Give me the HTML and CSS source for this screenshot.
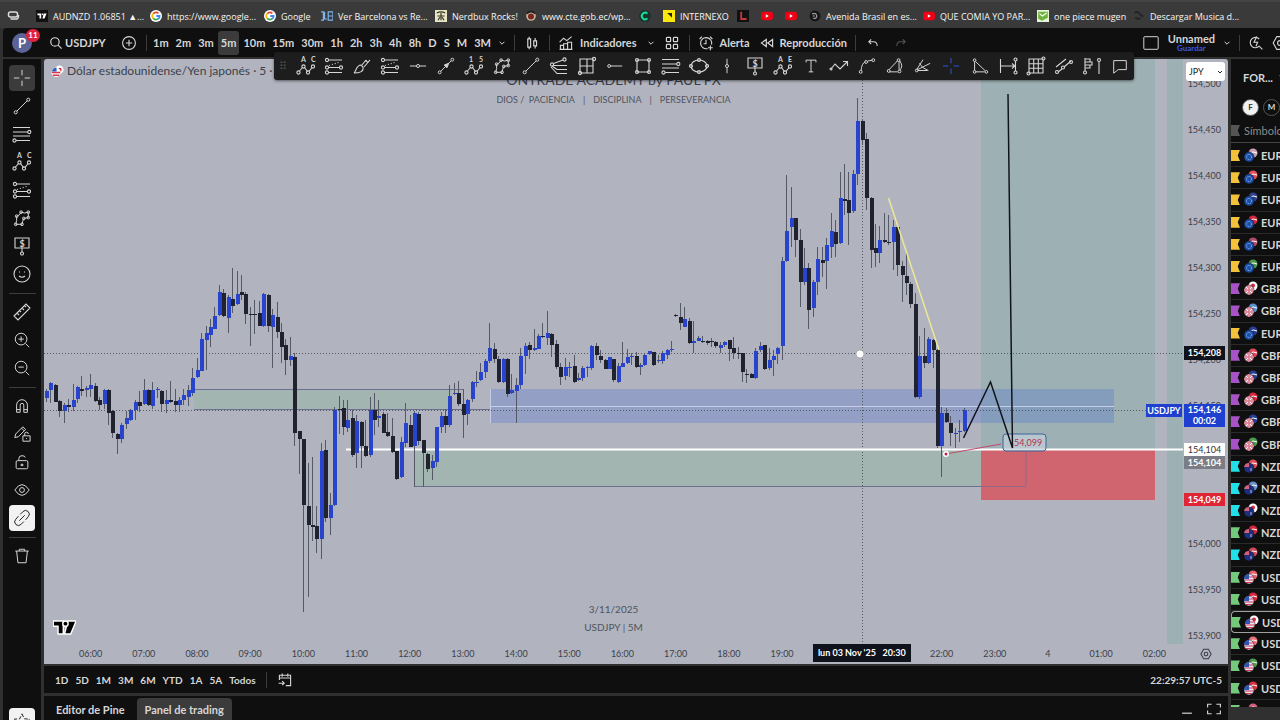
FILE: index.html
```html
<!DOCTYPE html>
<html lang="es">
<head>
    <meta charset="UTF-8">
    <meta name="viewport" content="width=device-width, initial-scale=1.0">
    <title>USDJPY 154,146</title>
    <link rel="stylesheet" href="styles.css">
</head>
<body>
    <!-- icon sprite -->
    <svg class="sprite" aria-hidden="true">
        <symbol id="i-cross" viewBox="0 0 20 20"><path d="M10 1v6M10 13v6M1 10h6M13 10h6"/></symbol>
        <symbol id="i-trend" viewBox="0 0 20 20"><path d="M4.2 15.8 15.8 4.2"/><circle cx="3" cy="17" r="1.7"/><circle cx="17" cy="3" r="1.7"/></symbol>
        <symbol id="i-fib" viewBox="0 0 20 20"><path d="M1 3.5h17M1 8h15M1 12h17M4 16.500h14"/><circle cx="17.300" cy="8" r="1.600"/><circle cx="2.500" cy="16.500" r="1.600"/></symbol>
        <symbol id="i-waves" viewBox="0 0 20 20"><path d="m3.500 15 3-3.500M8.500 11.500l3 4M13 15.500l3-4"/><circle cx="2.500" cy="16.500" r="1.600"/><circle cx="7.500" cy="10.500" r="1.600"/><circle cx="12" cy="16.500" r="1.600"/><circle cx="17" cy="10.500" r="1.600"/></symbol>
        <symbol id="i-abc" viewBox="0 0 20 20"><use href="#i-waves"/><text x="5" y="6">A</text><text x="15" y="6">C</text></symbol>
        <symbol id="i-135" viewBox="0 0 20 20"><use href="#i-waves"/><text x="5" y="6">1</text><text x="15" y="6">5</text></symbol>
        <symbol id="i-abe" viewBox="0 0 20 20"><use href="#i-waves"/><text x="5" y="6">A</text><text x="15" y="6">E</text></symbol>
        <symbol id="i-proj" viewBox="0 0 20 20"><path d="M4.500 4H18M4.500 11.500h11M4.500 16.500H18"/><path d="M5 9.500 16 6" stroke-dasharray="1 2"/><circle cx="3" cy="4" r="1.600"/><circle cx="3" cy="11.500" r="1.600"/><circle cx="17" cy="11.500" r="1.600"/><circle cx="3" cy="16.500" r="1.600"/></symbol>
        <symbol id="i-poly" viewBox="0 0 20 20"><path d="M4 8 7 6.500 9 3.500l4 1L17 3.500v6l-5 1-1 2.500-1 4H3l1-4z"/><circle cx="4" cy="8" r="1.500"/><circle cx="9" cy="3.500" r="1.500"/><circle cx="17" cy="3.500" r="1.500"/><circle cx="17" cy="9.500" r="1.500"/><circle cx="12" cy="10.500" r="1.500"/><circle cx="10" cy="17" r="1.500"/><circle cx="3" cy="17" r="1.500"/></symbol>
        <symbol id="i-dollar" viewBox="0 0 20 20"><path d="M3 2h14v10H3zM10 12v4"/><circle cx="10" cy="17.500" r="1.500"/><text x="7.500" y="10.500" class="big">$</text></symbol>
        <symbol id="i-smile" viewBox="0 0 20 20"><circle cx="10" cy="10" r="8"/><path d="M7.500 7.500v1M12.500 7.500v1M7 12q3 2.500 6 0"/></symbol>
        <symbol id="i-ruler" viewBox="0 0 20 20"><path d="m2 14 12-12 4 4L6 18zM5 11l2 2M7.500 8.500l1.500 1.500M10 6l2 2M12.500 3.500 14 5"/></symbol>
        <symbol id="i-zoomin" viewBox="0 0 20 20"><circle cx="9" cy="9" r="6.500"/><path d="m14 14 4 4M9 6v6M6 9h6"/></symbol>
        <symbol id="i-zoomout" viewBox="0 0 20 20"><circle cx="9" cy="9" r="6.500"/><path d="m14 14 4 4M6 9h6"/></symbol>
        <symbol id="i-magnet" viewBox="0 0 20 20"><path d="M4 17V9a6 6 0 0 1 12 0v8h-4V9a2 2 0 0 0-4 0v8zM4 14h4M12 14h4"/></symbol>
        <symbol id="i-penlock" viewBox="0 0 20 20"><path d="m2 14 1-4 8-8 3 3-8 8zM9.500 3.500l3 3M11 12h8v6h-8zM13 12v-2a2 2 0 0 1 4 0M15 14.500v1"/></symbol>
        <symbol id="i-lock" viewBox="0 0 20 20"><rect x="3.500" y="8.500" width="13" height="9" rx="1.500"/><path d="M6.500 8.500V6q0-3 3.500-3t3.500 2M9 12.500h2v1.500H9z"/></symbol>
        <symbol id="i-eye" viewBox="0 0 20 20"><path d="M2 10q8-12 16 0-8 12-16 0z"/><circle cx="10" cy="10" r="2.700"/></symbol>
        <symbol id="i-link" viewBox="0 0 20 20"><path d="m8 6 3-3a3.500 3.500 0 0 1 6 5.500L14 12M12 14l-3 3a3.500 3.500 0 0 1-6-5.500L6 8M7 13l6-6"/></symbol>
        <symbol id="i-trash" viewBox="0 0 20 20"><path d="M2.500 4.500h15M7 4.500v-2h6v2M4 4.500l1.500 13h9L16 4.500"/></symbol>
        <symbol id="i-star" viewBox="0 0 20 20"><path d="m10 2 2.500 5.500 6 .5-4.500 4 1.500 6L10 15l-5.500 3L6 12 1.500 8l6-.5z" stroke-dasharray="4 2"/></symbol>
        <symbol id="i-brush" viewBox="0 0 20 20"><path d="M2 17c2-1 2-8 7-8l2 2c1 5-4 6-9 6zM10 9l4-5M12 11l6-7M14 4q1 4 4 0"/></symbol>
        <symbol id="i-hline" viewBox="0 0 20 20"><path d="M1 10h7M12 10h7"/><circle cx="10" cy="10" r="1.700"/></symbol>
        <symbol id="i-arrow" viewBox="0 0 20 20"><path d="M4 16 15.500 4.500"/><path d="m13 7-2 5-3-3z" fill="currentColor"/><circle cx="3" cy="17" r="1.600"/><circle cx="17" cy="3" r="1.600"/></symbol>
        <symbol id="i-fan" viewBox="0 0 20 20"><path d="M4.500 7.500 14 4M4 9.500h14M3 10l5 3.500h10M2 11l6 6.500h10"/><circle cx="3" cy="8.500" r="1.600"/><circle cx="15.500" cy="3.500" r="1.600"/></symbol>
        <symbol id="i-gann" viewBox="0 0 20 20"><path d="M3 3h13v14H3zM3 10h13M10 3v14"/><circle cx="17" cy="3" r="1.600"/><circle cx="3" cy="17" r="1.600"/></symbol>
        <symbol id="i-ray" viewBox="0 0 20 20"><path d="M5 10h13"/><circle cx="3.500" cy="10" r="1.600"/></symbol>
        <symbol id="i-rect" viewBox="0 0 20 20"><path d="M4 4h12v12H4z"/><circle cx="4" cy="4" r="1.500"/><circle cx="16" cy="4" r="1.500"/><circle cx="4" cy="16" r="1.500"/><circle cx="16" cy="16" r="1.500"/></symbol>
        <symbol id="i-ellipse" viewBox="0 0 20 20"><ellipse cx="10" cy="10" rx="8" ry="6"/><circle cx="2" cy="10" r="1.500"/><circle cx="18" cy="10" r="1.500"/><circle cx="10" cy="4" r="1.500"/><circle cx="10" cy="16" r="1.500"/></symbol>
        <symbol id="i-vline" viewBox="0 0 20 20"><path d="M10 2v6M10 12v6"/><circle cx="10" cy="10" r="1.700"/></symbol>
        <symbol id="i-text" viewBox="0 0 20 20"><path d="M4.500 6V3.500h11V6M10 3.500v13M7.500 16.500h5"/></symbol>
        <symbol id="i-zig" viewBox="0 0 20 20"><path d="m2 13 4-5 5 5 7-7M14 5.500h4.500V10"/><circle cx="2" cy="13" r="1"/></symbol>
        <symbol id="i-curve" viewBox="0 0 20 20"><path d="M3.500 15Q4 7 8 5.500M11 4.500l5-1"/><circle cx="3" cy="16.500" r="1.600"/><circle cx="9" cy="5.500" r="1.600"/><circle cx="17" cy="3.500" r="1.600"/></symbol>
        <symbol id="i-sector" viewBox="0 0 20 20"><path d="M3.500 14 13 4M14.500 5v9M4 16.500h9"/><path d="M15 4q5 6 0 11"/><circle cx="14" cy="3.500" r="1.600"/><circle cx="3" cy="15.500" r="1.600"/><circle cx="15" cy="16" r="1.600"/></symbol>
        <symbol id="i-angle" viewBox="0 0 20 20"><path d="M3 14 10 3M4 15h11M4 14 18 7M6 7q3 6 10 8"/><circle cx="3" cy="15" r="1.500"/></symbol>
        <symbol id="i-tri" viewBox="0 0 20 20"><path d="M4 5v10M5 16.500h10M5 5l10.500 10"/><circle cx="4" cy="3.500" r="1.500"/><circle cx="4" cy="16.500" r="1.500"/><circle cx="17" cy="16.500" r="1.500"/></symbol>
        <symbol id="i-range" viewBox="0 0 20 20"><path d="M2.500 3v14M17.500 5v10M3 10h14M14 7.500l3 2.500-3 2.500"/><circle cx="17.500" cy="3.500" r="1.500"/><circle cx="17.500" cy="16.500" r="1.500"/></symbol>
        <symbol id="i-grid" viewBox="0 0 20 20"><path d="M3 3h14v14H3zM3 7.700h14M3 12.300h14M7.700 3v14M12.300 3v14"/><circle cx="17.500" cy="2.500" r="1.500"/><circle cx="2.500" cy="17.500" r="1.500"/></symbol>
        <symbol id="i-par" viewBox="0 0 20 20"><path d="M2 11 12 3M4 16l4-3M10 11l7-6"/><circle cx="3" cy="16" r="1.500"/><circle cx="9" cy="11.500" r="1.500"/><circle cx="17" cy="6" r="1.500"/></symbol>
        <symbol id="i-vol" viewBox="0 0 20 20"><path d="M3 2v13M3 3h5v3H3M3 6h7v3H3M3 9h5v3H3M17 6v12"/><circle cx="3" cy="16.500" r="1.500"/><circle cx="17" cy="4" r="1.500"/></symbol>
        <symbol id="i-note" viewBox="0 0 20 20"><path d="M3 4h14v10H8l-5 4z"/></symbol>
        <symbol id="i-search" viewBox="0 0 20 20"><circle cx="8.500" cy="8.500" r="6"/><path d="m13 13 5 5"/></symbol>
        <symbol id="i-plus" viewBox="0 0 20 20"><circle cx="10" cy="10" r="8"/><path d="M10 6v8M6 10h8"/></symbol>
        <symbol id="i-chev" viewBox="0 0 20 20"><path d="m4 7 6 6 6-6"/></symbol>
        <symbol id="i-candles" viewBox="0 0 20 20"><path d="M4 4h4v12H4zM6 1v3M6 16v3M12.500 7h4v7h-4zM14.500 3v4M14.500 14v4"/></symbol>
        <symbol id="i-ind" viewBox="0 0 20 20"><path d="M3 18v-5h4v5M7 18v-7h5v7M12 18V9h5v9M2 18h16M2 9l5-5 4 3 6-5"/></symbol>
        <symbol id="i-apps" viewBox="0 0 20 20"><rect x="2" y="2" width="6" height="6" rx="1"/><rect x="12" y="2" width="6" height="6" rx="1"/><rect x="2" y="12" width="6" height="6" rx="1"/><rect x="12" y="12" width="6" height="6" rx="1"/></symbol>
        <symbol id="i-alarm" viewBox="0 0 20 20"><path d="M12 17a7 7 0 1 1 5-5M10 6v5H7M2 5l3-3M15 2l3 3M15.500 13v6M12.500 16h6"/></symbol>
        <symbol id="i-replay" viewBox="0 0 20 20"><path d="M9 5v10l-7-5zM18 5v10l-7-5z"/></symbol>
        <symbol id="i-undo" viewBox="0 0 20 20"><path d="M7 4 3 8l4 4M3 8h8q6 0 6 7"/></symbol>
        <symbol id="i-redo" viewBox="0 0 20 20"><path d="m13 4 4 4-4 4M17 8H9q-6 0-6 7"/></symbol>
        <symbol id="i-square" viewBox="0 0 20 20"><rect x="2" y="3" width="16" height="14" rx="1"/></symbol>
        <symbol id="i-bolt" viewBox="0 0 20 20"><path d="M14 5a6.500 6.500 0 1 0 0 9l4 4M11 2 7.500 9H12l-2 5"/></symbol>
        <symbol id="i-cal" viewBox="0 0 20 20"><path d="M3 10V4h14v13h-6M3 7.500h14M6.500 2v4M13.500 2v4M2 14h7M6.500 11.500 9 14l-2.500 2.500"/></symbol>
        <symbol id="i-gear" viewBox="0 0 20 20"><path d="M6 2h8l4.500 8L14 18H6l-4.500-8z"/><circle cx="10" cy="10" r="3"/></symbol>
        <symbol id="i-full" viewBox="0 0 20 20"><path d="M2 8V4h5M13 4h5v4M18 12v4h-5M7 16H2v-4"/></symbol>
        <symbol id="i-google" viewBox="0 0 20 20"><circle cx="10" cy="10" r="10" fill="#fff" stroke="none"/><g fill="none" stroke-width="3"><path d="M5.500 6A6 6 0 0 1 14 5.500" stroke="#ea4335"/><path d="M5.500 6a6 6 0 0 0 0 8" stroke="#fbbc05"/><path d="M5.500 14a6 6 0 0 0 8.500.500" stroke="#34a853"/><path d="M10.500 10H16q0 3-2 4.500" stroke="#4285f4"/></g></symbol>
        <symbol id="i-yt" viewBox="0 0 20 20"><rect y="3" width="20" height="14" rx="4" fill="#f00014" stroke="none"/><path d="m8 7 5 3-5 3z" fill="#fff" stroke="none"/></symbol>
        <symbol id="i-tv" viewBox="0 0 24 14"><path d="M1 1h9v12H6V5H1zM16 1h7l-5 12h-5z"/><circle cx="13" cy="3" r="2"/></symbol>
    </svg>

    <nav class="bookmarks">
        <span class="bm-tabs"><svg viewBox="0 0 12 10"><rect x="1" y="1" width="9" height="5" rx="2"/><path d="M3 8h6q2 0 2-4"/></svg></span>
        <a href="#" class="bm"><svg class="bm-tv"><use href="#i-tv"/></svg>AUDNZD 1.06851 ▲...</a>
        <a href="#" class="bm"><svg><use href="#i-google"/></svg>https://www.google...</a>
        <a href="#" class="bm bm-short"><svg><use href="#i-google"/></svg>Google</a>
        <a href="#" class="bm"><svg viewBox="0 0 20 20"><path d="M0 3h4v14H0M6 3v12h4M12 3h8v14h-8zM12 10h8" stroke="#7fb4ec" stroke-width="2"/></svg>Ver Barcelona vs Re...</a>
        <a href="#" class="bm bm-mid"><svg viewBox="0 0 20 20"><path d="M0 0h20v20H0z" fill="#e9e6c8" stroke="none"/><path d="M3 5q7-4 14 0M4 10h12M10 5v12M5 17l3-5M15 17l-3-5" stroke="#33331f" stroke-width="2"/></svg>Nerdbux Rocks!</a>
        <a href="#" class="bm"><svg viewBox="0 0 20 20"><circle cx="10" cy="10" r="8" fill="#c9b79a" stroke="none"/><circle cx="10" cy="11" r="5" fill="#78271f" stroke="none"/><path d="M3 6q7-7 14 0" stroke="#222" stroke-width="3"/></svg>www.cte.gob.ec/wp...</a>
        <a href="#" class="bm bm-icon" aria-label="C"><svg viewBox="0 0 20 20"><circle cx="10" cy="10" r="10" fill="#14342d" stroke="none"/><path d="M14 6a5.500 5.500 0 1 0 0 8" stroke="#1fe0a0" stroke-width="3"/></svg></a>
        <a href="#" class="bm bm-name"><svg viewBox="0 0 20 20"><path d="M0 0h20v20H0z" fill="#fbe80b" stroke="none"/><path d="M7 5h8v8z" fill="#222" stroke="none"/></svg>INTERNEXO</a>
        <a href="#" class="bm bm-icon" aria-label="L"><svg viewBox="0 0 20 20"><path d="M0 0h20v20H0z" fill="#111" stroke="none"/><path d="M7 3v12h9" stroke="#c33a3a" stroke-width="3"/></svg></a>
        <a href="#" class="bm bm-icon" aria-label="YouTube"><svg><use href="#i-yt"/></svg></a>
        <a href="#" class="bm bm-icon" aria-label="YouTube"><svg><use href="#i-yt"/></svg></a>
        <a href="#" class="bm"><svg viewBox="0 0 20 20"><circle cx="10" cy="10" r="9" fill="#161616" stroke="none"/><path d="M5 6h6q4 4 0 8H7M6 10h4" stroke="#999" stroke-width="2"/></svg>Avenida Brasil en es...</a>
        <a href="#" class="bm"><svg><use href="#i-yt"/></svg>QUE COMIA YO PAR...</a>
        <a href="#" class="bm bm-op"><svg viewBox="0 0 20 20"><path d="M0 0h20v20H0z" fill="#e6f3d8" stroke="none"/><path d="M2 3h16v10L8 18 2 14z" fill="#6db33a" stroke="none"/><path d="m4 6 5 4 7-5" stroke="#fff" stroke-width="2"/></svg>one piece mugen</a>
        <a href="#" class="bm"><svg viewBox="0 0 20 20"><path d="M3 5q4-4 7 0t7 6M4 12q4 5 8 1" stroke="#222" stroke-width="3"/></svg>Descargar Musica d...</a>
    </nav>

    <header class="topbar">
        <div class="avatar">P<span class="badge">11</span></div>
        <button class="symbol"><svg class="ic s14"><use href="#i-search"/></svg>USDJPY</button>
        <button class="add" aria-label="Comparar"><svg class="ic s16"><use href="#i-plus"/></svg></button>
        <i class="sep"></i>
        <div class="intervals">
            <button>1m</button><button>2m</button><button>3m</button><button class="active">5m</button><button>10m</button><button>15m</button><button>30m</button><button>1h</button><button>2h</button><button>3h</button><button>4h</button><button>8h</button><button>D</button><button>S</button><button>M</button><button>3M</button>
        </div>
        <button aria-label="Más intervalos"><svg class="ic s8"><use href="#i-chev"/></svg></button>
        <i class="sep"></i>
        <button class="roomy" aria-label="Velas"><svg class="ic s14"><use href="#i-candles"/></svg></button>
        <i class="sep"></i>
        <button class="labelled"><svg class="ic s16"><use href="#i-ind"/></svg>Indicadores</button>
        <button aria-label="Favoritos"><svg class="ic s8"><use href="#i-chev"/></svg></button>
        <button class="roomy" aria-label="Plantillas"><svg class="ic s14"><use href="#i-apps"/></svg></button>
        <i class="sep"></i>
        <button class="labelled"><svg class="ic s16"><use href="#i-alarm"/></svg>Alerta</button>
        <button class="labelled last"><svg class="ic s14"><use href="#i-replay"/></svg>Reproducción</button>
        <i class="sep"></i>
        <button class="roomy" aria-label="Deshacer"><svg class="ic s12"><use href="#i-undo"/></svg></button>
        <button class="roomy dim" aria-label="Rehacer"><svg class="ic s12"><use href="#i-redo"/></svg></button>
        <div class="topright">
            <button aria-label="Diseño"><svg class="ic s18"><use href="#i-square"/></svg></button>
            <button class="layout-name">Unnamed<span>Guardar</span></button>
            <button aria-label="Diseños"><svg class="ic s8"><use href="#i-chev"/></svg></button>
            <i class="sep"></i>
            <button aria-label="Búsqueda rápida"><svg class="ic s16"><use href="#i-bolt"/></svg></button>
            <button aria-label="Ajustes"><svg class="ic s16"><use href="#i-gear"/></svg></button>
        </div>
    </header>

    <div class="workspace">
        <aside class="tools">
            <button class="active" aria-label="Cruz"><svg class="ic s18"><use href="#i-cross"/></svg></button>
            <button aria-label="Línea"><svg class="ic s18"><use href="#i-trend"/></svg></button>
            <button aria-label="Fibonacci"><svg class="ic s20"><use href="#i-fib"/></svg></button>
            <button aria-label="Patrones"><svg class="ic s20"><use href="#i-abc"/></svg></button>
            <button aria-label="Proyección"><svg class="ic s20"><use href="#i-proj"/></svg></button>
            <button aria-label="Formas"><svg class="ic s18"><use href="#i-poly"/></svg></button>
            <button aria-label="Nota de precio"><svg class="ic s20"><use href="#i-dollar"/></svg></button>
            <button aria-label="Iconos"><svg class="ic s20"><use href="#i-smile"/></svg></button>
            <hr>
            <button aria-label="Medir"><svg class="ic s20"><use href="#i-ruler"/></svg></button>
            <button aria-label="Acercar"><svg class="ic s18"><use href="#i-zoomin"/></svg></button>
            <button aria-label="Alejar"><svg class="ic s18"><use href="#i-zoomout"/></svg></button>
            <hr>
            <button aria-label="Imán"><svg class="ic s18"><use href="#i-magnet"/></svg></button>
            <button aria-label="Modo dibujo"><svg class="ic s18"><use href="#i-penlock"/></svg></button>
            <button aria-label="Bloquear"><svg class="ic s18"><use href="#i-lock"/></svg></button>
            <button aria-label="Ocultar"><svg class="ic s18"><use href="#i-eye"/></svg></button>
            <button class="light" aria-label="Vincular"><svg class="ic s18"><use href="#i-link"/></svg></button>
            <hr>
            <button aria-label="Eliminar"><svg class="ic s18"><use href="#i-trash"/></svg></button>
            <button class="light star" aria-label="Favoritos"><svg class="ic s18"><use href="#i-star"/></svg></button>
        </aside>

        <main class="center">
            <section class="chart">
                <div class="plot">
                    <svg id="canvas" viewBox="44 59 1139 585" preserveAspectRatio="none">
                        <rect class="profit" x="981" y="59" width="174" height="391"/>
                        <rect class="profit" x="1167" y="59" width="16" height="585"/>
                        <rect class="demand" x="194" y="390" width="258" height="20"/>
                        <path class="edge" d="M194 389.500H463M194 409.500H490"/>
                        <rect class="demand" x="415" y="450" width="611" height="36"/>
                        <path class="edge" d="M415 486.500h611V450"/>
                        <rect class="supply" x="490" y="389" width="624" height="34"/>
                        <path class="supply-mid" d="M490 406.500h624M490.500 389v34"/>
                        <rect class="loss" x="981" y="450" width="174" height="50"/>
                        <path class="edge" d="M981 486.500h45V450" opacity=".6"/>
                        <path class="dots" d="M44 353.500H1183M44 410.500H1183M862.500 59V644"/>
                        <path class="support" d="M346 449.500H1183"/>
                        <g id="candles"></g>
                        <path class="yellow" d="M888.500 198 939 350"/>
                        <rect class="callout" x="1003" y="434" width="43" height="17" rx="3"/>
                        <path class="pink" d="M946 454 1001 444"/>
                        <circle cx="946" cy="454" r="3" fill="#fff"/><circle cx="946" cy="454" r="1.500" fill="#c02050"/>
                        <text class="callout-text" x="1014" y="446">54,099</text>
                        <path class="draw" d="M963.500 438 990.500 382 1012.500 448 1008 94"/>
                        <circle cx="860" cy="354" r="4" fill="#fff" stroke="#777" stroke-width=".5"/>
                    </svg>
                    <div class="legend">
                        <svg viewBox="0 0 14 14"><circle cx="9" cy="5" r="4.500" fill="#fff"/><circle cx="9.500" cy="5" r="2" fill="#d8324c"/><circle cx="5.500" cy="8" r="5" fill="#fff"/><path d="M1 8h9M2 11h7" stroke="#d8324c" stroke-width="1.500"/><path d="M1 7a5 5 0 0 1 5-4v4z" fill="#2d5dc2"/></svg>
                        Dólar estadounidense/Yen japonés · 5 ·
                    </div>
                    <div class="mark">
                        <div class="mark-title">ONTRADE ACADEMY by PAUL FX</div>
                        <div class="mark-motto"><span>DIOS / &nbsp;PACIENCIA</span><span>|</span><span>DISCIPLINA</span><span>|</span><span>PERSEVERANCIA</span></div>
                        <div class="mark-date">3/11/2025</div>
                        <div>USDJPY | 5M</div>
                    </div>
                    <svg class="tv-logo"><use href="#i-tv"/></svg>
                    <span class="tag tag-name">USDJPY</span>
                </div>
                <div class="prices">
                    <select aria-label="Moneda"><option>JPY</option></select>
                    <div class="price-list" id="prices"></div>
                    <span class="tag tag-cursor">154,208</span>
                    <span class="tag tag-last">154,146<br>00:02</span>
                    <span class="tag tag-white">154,104</span>
                    <span class="tag tag-gray">154,104</span>
                    <span class="tag tag-red">154,049</span>
                </div>
                <div class="times">
                    <div class="time-list" id="times"></div>
                    <span class="tag tag-time">lun 03 Nov '25 &nbsp; 20:30</span>
                </div>
                <button class="gear" aria-label="Ajustes de escala"><svg class="ic s12"><use href="#i-gear"/></svg></button>
            </section>

            <section class="ranges">
                <button>1D</button><button>5D</button><button>1M</button><button>3M</button><button>6M</button><button>YTD</button><button>1A</button><button>5A</button><button>Todos</button>
                <i class="sep"></i>
                <button aria-label="Ir a"><svg class="ic s16"><use href="#i-cal"/></svg></button>
                <span class="clock">22:29:57 UTC-5</span>
            </section>

            <section class="panel-tabs">
                <button>Editor de Pine</button>
                <button class="active">Panel de trading</button>
                <div class="panel-actions">
                    <button aria-label="Minimizar"><svg class="ic s14" viewBox="0 0 20 20"><path d="M3 16h14"/></svg></button>
                    <button aria-label="Maximizar"><svg class="ic s16"><use href="#i-full"/></svg></button>
                </div>
            </section>
        </main>

        <aside class="watch">
            <div class="watch-title">FOR... <svg class="ic s8"><use href="#i-chev"/></svg></div>
            <div class="watch-chips"><button class="on">F</button><button>M</button></div>
            <div class="watch-head"><i></i>Símbolo</div>
            <div class="watch-list" id="watch"></div>
        </aside>
    </div>

    <div class="favbar">
        <span class="grip">⠿</span>
        <button aria-label="ABC"><svg class="ic s20"><use href="#i-abc"/></svg></button>
        <button aria-label="Posición larga"><svg class="ic s20"><use href="#i-proj"/></svg></button>
        <button aria-label="Pincel"><svg class="ic s20"><use href="#i-brush"/></svg></button>
        <button aria-label="Posición corta"><svg class="ic s20"><use href="#i-proj"/></svg></button>
        <button aria-label="Línea horizontal"><svg class="ic s18"><use href="#i-hline"/></svg></button>
        <button aria-label="Flecha"><svg class="ic s18"><use href="#i-arrow"/></svg></button>
        <button aria-label="Impulso"><svg class="ic s20"><use href="#i-135"/></svg></button>
        <button aria-label="Polígono"><svg class="ic s18"><use href="#i-poly"/></svg></button>
        <button aria-label="Tendencia"><svg class="ic s18"><use href="#i-trend"/></svg></button>
        <button aria-label="Abanico"><svg class="ic s20"><use href="#i-fan"/></svg></button>
        <button aria-label="Gann"><svg class="ic s20"><use href="#i-gann"/></svg></button>
        <button aria-label="Rayo"><svg class="ic s18"><use href="#i-ray"/></svg></button>
        <button aria-label="Rectángulo"><svg class="ic s20"><use href="#i-rect"/></svg></button>
        <button aria-label="Retroceso"><svg class="ic s20"><use href="#i-fib"/></svg></button>
        <button aria-label="Elipse"><svg class="ic s20"><use href="#i-ellipse"/></svg></button>
        <button aria-label="Línea vertical"><svg class="ic s18"><use href="#i-vline"/></svg></button>
        <button aria-label="Etiqueta de precio"><svg class="ic s20"><use href="#i-dollar"/></svg></button>
        <button aria-label="ABCDE"><svg class="ic s20"><use href="#i-abe"/></svg></button>
        <button aria-label="Texto"><svg class="ic s18"><use href="#i-text"/></svg></button>
        <button aria-label="Ruta"><svg class="ic s20"><use href="#i-zig"/></svg></button>
        <button aria-label="Curva"><svg class="ic s18"><use href="#i-curve"/></svg></button>
        <button aria-label="Sector"><svg class="ic s18"><use href="#i-sector"/></svg></button>
        <button aria-label="Ángulo"><svg class="ic s18"><use href="#i-angle"/></svg></button>
        <button class="picked" aria-label="Cruz"><svg class="ic s18"><use href="#i-cross"/></svg></button>
        <button aria-label="Triángulo"><svg class="ic s18"><use href="#i-tri"/></svg></button>
        <button aria-label="Rango"><svg class="ic s20"><use href="#i-range"/></svg></button>
        <button aria-label="Cuadrícula"><svg class="ic s20"><use href="#i-grid"/></svg></button>
        <button aria-label="Canal"><svg class="ic s20"><use href="#i-par"/></svg></button>
        <button aria-label="Perfil de volumen"><svg class="ic s20"><use href="#i-vol"/></svg></button>
        <button aria-label="Comentario"><svg class="ic s18"><use href="#i-note"/></svg></button>
    </div>

    <script src="script.js"></script>
</body>
</html>
```
FILE: styles.css
```css
* {
    box-sizing: border-box;
}
body {
    margin: 0;
    height: 100vh;
    overflow: hidden;
    display: flex;
    flex-direction: column;
    background-color: #303030;
    color: #d6d6d6;
    font-family: "Trebuchet MS", Lato, sans-serif;
    font-size: 11px;
    position: relative;
}
button {
    background: none;
    border: none;
    padding: 0;
    color: inherit;
    font: inherit;
    cursor: pointer;
    display: flex;
    align-items: center;
    justify-content: center;
    white-space: nowrap;
}
.sprite {
    display: none;
}
svg {
    flex: none;
}
.ic {
    display: block;
    fill: none;
    stroke: currentColor;
    stroke-width: 1.1;
    overflow: visible;
}
symbol text {
    font-size: 7px;
    font-weight: bold;
    fill: currentColor;
    stroke: none;
}
symbol text.big {
    font-size: 9px;
}
.s8 { width: 8px; height: 8px; stroke-width: 2.5; }
.s12 { width: 12px; height: 12px; stroke-width: 1.7; }
.s14 { width: 14px; height: 14px; stroke-width: 1.7; }
.s16 { width: 16px; height: 16px; stroke-width: 1.4; }
.s18 { width: 18px; height: 18px; }
.s20 { width: 20px; height: 20px; }

.sep {
    flex: none;
    width: 1px;
    height: 16px;
    background-color: #3d3d3d;
}

/* bookmarks */
.bookmarks {
    flex: none;
    height: 28px;
    padding: 2px 0 0 7px;
    display: flex;
    align-items: center;
    background-color: #3a3a3a;
    border-top: 2px solid #444;
    overflow: hidden;
    font-family: "Segoe UI", "Open Sans", sans-serif;
    font-size: 9px;
    font-weight: 500;
}
.bm-tabs {
    width: 29px;
    flex: none;
    display: flex;
}
.bm-tabs svg {
    width: 13px;
    height: 10px;
    fill: none;
    stroke: #ddd;
    stroke-width: 1.5;
}
.bm {
    flex: none;
    width: 114px;
    display: flex;
    align-items: center;
    gap: 5px;
    color: #f5f5f5;
    text-decoration: none;
    white-space: nowrap;
}
.bm svg {
    width: 12px;
    height: 12px;
    fill: none;
}
.bm .bm-tv {
    background-color: #111;
    fill: #fff;
    padding: 2px 1px;
}
.bm-short { width: 57px; }
.bm-mid { width: 90px; }
.bm-icon { width: 24px; }
.bm-name { width: 74px; }
.bm-op { width: 96px; }

/* top bar */
.topbar {
    flex: none;
    height: 29px;
    margin-left: 3px;
    padding-left: 9px;
    display: flex;
    align-items: center;
    background-color: #0f0f0f;
    font-weight: bold;
    border-radius: 4px 0 0 0;
}
.avatar {
    position: relative;
    width: 20px;
    height: 20px;
    border-radius: 50%;
    background-color: #5c6397;
    color: #fff;
    font-size: 13px;
    text-align: center;
    line-height: 20px;
}
.badge {
    position: absolute;
    top: -4px;
    left: 14px;
    min-width: 14px;
    height: 13px;
    border-radius: 7px;
    background-color: #e0213f;
    font-size: 8px;
    line-height: 13px;
}
.symbol {
    margin-left: 17px;
    gap: 2px;
    width: 56px;
    justify-content: flex-start;
}
.add {
    margin: 0 9px 0 16px;
}
.intervals {
    display: flex;
    flex: none;
    width: 344px;
    margin-right: 4px;
    justify-content: space-between;
}
.intervals button {
    height: 24px;
    padding: 0 3px;
    border-radius: 3px;
}
.intervals .active {
    background-color: #3b3b3b;
}
.topbar > .sep {
    margin: 0 8px;
}
.topbar .add + .sep {
    margin: 0 3px 0 0;
}
.roomy {
    width: 18px;
}
.labelled {
    gap: 6px;
    margin-right: 10px;
}
.labelled.last {
    margin-right: 0;
}
.labelled + button + .roomy {
    margin-left: 8px;
}
.dim {
    margin-left: 10px;
    color: #555;
}
.topright {
    flex: 1;
    display: flex;
    align-items: center;
    justify-content: flex-end;
    gap: 8px;
    margin-right: -8px;
}
.layout-name {
    flex-direction: column;
    line-height: 10px;
}
.layout-name span {
    font-size: 8px;
    line-height: 8px;
    color: #3a55f0;
}

/* workspace */
.workspace {
    flex: 1;
    min-height: 0;
    display: flex;
    padding: 2px 0 0 3px;
    gap: 3px;
}
.tools {
    flex: none;
    width: 38px;
    padding-top: 6px;
    display: flex;
    flex-direction: column;
    align-items: center;
    gap: 2px;
    background-color: #0f0f0f;
}
.tools button {
    flex: none;
    width: 26px;
    height: 26px;
    border-radius: 4px;
}
.tools .active {
    background-color: #3b3b3b;
}
.tools .light {
    background-color: #f2f2f2;
    color: #222;
}
.tools .star {
    margin-top: auto;
    margin-bottom: -14px;
}
.tools hr {
    flex: none;
    width: 27px;
    height: 1px;
    margin: 4px 0 3px;
    border: none;
    background-color: #3d3d3d;
}
.center {
    flex: 1;
    min-width: 0;
    display: flex;
    flex-direction: column;
}

/* chart */
.chart {
    flex: 1;
    min-height: 0;
    display: grid;
    grid-template-columns: 1fr 45px;
    grid-template-rows: 1fr 20px;
    background-color: #b1b4bf;
    color: #3c3f4a;
    border-radius: 3px 3px 0 0;
    font-size: 9px;
    overflow: hidden;
}
.plot, .prices, .times {
    position: relative;
    min-height: 0;
}
#canvas {
    display: block;
    position: absolute;
    width: 100%;
    height: 100%;
}
#canvas path {
    fill: none;
}
.profit { fill: #9db1b4; }
.demand { fill: #86b890; fill-opacity: .3; }
.supply { fill: #4064d8; fill-opacity: .26; }
.loss { fill: #d0656f; }
.edge { stroke: #6d6f92; }
.supply-mid { stroke: #c5cce6; }
.dots { stroke: #555862; stroke-dasharray: 1 2; }
.support { stroke: #fff; stroke-width: 2; }
.yellow { stroke: #ece79a; stroke-width: 1.5; }
.draw { stroke: #10131c; stroke-width: 1.5; }
.pink { stroke: #c04a6c; }
.callout { fill: #c3cfda; fill-opacity: .7; stroke: #3d6399; }
.callout-text { fill: #b5304f; font-size: 9px; }
.up { fill: #2843cc; }
.down { fill: #20232f; }
.wick { stroke: #555866; }

.legend {
    position: absolute;
    top: 4px;
    left: 7px;
    display: flex;
    align-items: center;
    gap: 3px;
    font-size: 12px;
    line-height: 16px;
    white-space: nowrap;
}
.legend svg {
    width: 13px;
    height: 13px;
}
.mark {
    position: absolute;
    top: 10px;
    right: 0;
    bottom: 8px;
    left: 0;
    display: flex;
    flex-direction: column;
    align-items: center;
    font-size: 10px;
    line-height: 18px;
    color: #50535e;
}
.mark-title {
    font-size: 14px;
    line-height: 22px;
    color: #3c3f4a;
}
.mark-motto {
    display: flex;
    gap: 8px;
    font-size: 9px;
}
.mark-date {
    margin-top: auto;
}
.tv-logo {
    position: absolute;
    left: 9px;
    bottom: 9px;
    width: 23px;
    height: 15px;
    overflow: visible;
    fill: #000;
    stroke: #fff;
    stroke-width: 3;
    paint-order: stroke;
}
.prices select {
    position: absolute;
    z-index: 1;
    top: 3px;
    left: 3px;
    width: 39px;
    height: 19px;
    padding: 0 3px;
    appearance: none;
    border: none;
    border-radius: 3px;
    background: #fff url("data:image/svg+xml,%3Csvg xmlns='http://www.w3.org/2000/svg' viewBox='0 0 8 8'%3E%3Cpath d='M2 3l2 2 2-2' fill='none' stroke='%23222'/%3E%3C/svg%3E") no-repeat right 1px center / 8px 8px;
    color: #222;
    font-family: inherit;
    font-size: 9px;
}
.price-list {
    height: 100%;
    padding: 2px 7px 0 0;
    display: flex;
    flex-direction: column;
}
.price-list span {
    flex: 0 0 46px;
    line-height: 46px;
    text-align: right;
}
.tag {
    position: absolute;
    left: 1px;
    width: 41px;
    height: 14px;
    margin-top: -7px;
    line-height: 14px;
    text-align: center;
    font-weight: bold;
    color: #fff;
}
.tag-cursor { top: 50.3%; background-color: #10131c; }
.tag-last { top: 60.2%; height: 23px; line-height: 11px; background-color: #1e3fd0; }
.tag-white { top: 66.8%; background-color: #fff; color: #333; height: 13px; line-height: 13px; font-weight: normal; }
.tag-gray { top: 69%; height: 13px; line-height: 13px; background-color: #7b7d86; }
.tag-red { top: 75.3%; height: 13px; line-height: 13px; background-color: #e02636; }
.tag-name { top: 60.2%; left: auto; right: 1px; width: 36px; height: 13px; line-height: 13px; background-color: #1e3fd0; }
.time-list {
    display: flex;
    height: 100%;
    padding: 0 2px 0 20px;
    line-height: 20px;
}
.time-list span {
    flex: 1 1 0;
    min-width: 0;
    text-align: center;
}
.tag-time {
    top: 0;
    left: 67.5%;
    width: 98px;
    height: 18px;
    margin: 0;
    line-height: 18px;
    background-color: #10131c;
}

/* bottom */
.ranges, .panel-tabs {
    flex: none;
    display: flex;
    align-items: center;
    background-color: #0f0f0f;
    font-weight: bold;
}
.ranges {
    height: 27px;
    margin-top: 2px;
    padding: 0 6px 0 11px;
    gap: 7px;
    font-size: 10px;
}
.ranges .sep {
    margin: 0 3px;
}
.clock {
    margin-left: auto;
}
.panel-tabs {
    height: 24px;
    margin-top: 3px;
    padding: 2px 6px 0 4px;
    gap: 4px;
}
.panel-tabs > button {
    height: 22px;
    padding: 0 8px;
    border-radius: 4px 4px 0 0;
}
.panel-tabs .active {
    background-color: #3b3b3b;
}
.panel-actions {
    margin-left: auto;
    display: flex;
    gap: 12px;
}

/* watchlist */
.watch {
    flex: none;
    width: 49px;
    margin-bottom: 13px;
    display: flex;
    flex-direction: column;
    background-color: #0f0f0f;
    overflow: hidden;
    font-weight: bold;
    white-space: nowrap;
}
.watch-title {
    flex: none;
    height: 36px;
    padding-left: 12px;
    display: flex;
    align-items: center;
    gap: 5px;
}
.watch-chips {
    flex: none;
    height: 24px;
    padding-left: 11px;
    display: flex;
    align-items: center;
    gap: 4px;
}
.watch-chips button {
    flex: none;
    width: 17px;
    height: 17px;
    border: 1px solid #555;
    border-radius: 50%;
    font-size: 8px;
}
.watch-chips .on {
    background-color: #f2f2f2;
    color: #333;
}
.watch-head {
    flex: none;
    height: 24px;
    display: flex;
    align-items: center;
    gap: 4px;
    font-weight: normal;
    color: #8a8a8a;
    border-bottom: 1px solid #444;
}
.watch-head i, .flag {
    flex: none;
    width: 9px;
    height: 11px;
    background-color: #555;
    clip-path: polygon(0 0, 100% 0, 75% 50%, 100% 100%, 0 100%);
}
.watch-list {
    flex: 1;
    min-height: 0;
    overflow: hidden;
    padding-top: 2px;
    display: flex;
    flex-direction: column;
}
.row {
    flex: 0 0 3.95%;
    display: flex;
    align-items: center;
    gap: 3px;
    border-bottom: 1px solid #2a2a2a;
}
.row svg {
    width: 15px;
    height: 15px;
}
.row.selected {
    border: 1px solid #a0a0a0;
    border-right: none;
    border-radius: 4px 0 0 4px;
}
.yellow-flag { background-color: #f3c13a; }
.purple-flag { background-color: #a852c8; }
.cyan-flag { background-color: #22e0e8; }
.green-flag { background-color: #74c97c; }

/* floating favourites */
.favbar {
    position: absolute;
    top: 52px;
    left: 274px;
    width: 860px;
    height: 28px;
    display: flex;
    align-items: center;
    background-color: #1d1d1d;
    border-radius: 3px;
    box-shadow: 0 1px 3px rgba(0, 0, 0, 0.5);
}
.favbar button {
    flex: 1;
    height: 28px;
}
.grip {
    width: 18px;
    text-align: center;
    color: #555;
}
.favbar .picked {
    color: #2f55d8;
}
```
FILE: script.js
```js
// one candle per 5 minutes: high, body top, body bottom, low, direction
var candles = `389 391 398 402 u|382 383 390 403 u|384 385 402 402 d|400 401 411 417 d|403 405 411 423 u|399 405 407 412 d
384 400 407 411 u|386 387 399 403 u|376 389 391 396 d|386 388 390 397 u|374 385 389 397 u|383 386 401 402 d
397 400 405 410 d|389 390 404 409 u|389 390 413 425 d|410 411 433 438 d|433 434 439 454 d|423 425 439 443 u
411 418 424 429 u|409 410 420 421 u|400 402 410 420 u|391 402 406 412 d|379 390 404 405 u|389 390 405 406 d
382 390 406 409 u|387 389 390 398 u|390 391 404 412 d|390 400 404 413 u|381 400 402 403 d|389 401 405 412 d
397 400 405 412 u|389 395 400 405 u|385 390 397 406 u|368 378 393 396 u|358 370 377 378 u|333 339 371 371 u
326 333 340 370 u|319 327 335 347 u|307 316 329 329 u|285 292 315 316 u|289 293 316 317 d|295 297 318 333 u
268 299 306 313 d|271 294 304 305 u|275 292 295 300 d|292 294 314 324 d|307 314 315 346 d|300 314 315 334 d
301 313 326 326 d|293 294 326 327 u|294 295 326 332 d|309 315 327 368 u|302 317 332 338 d|323 332 347 363 d
339 345 360 375 d|337 356 360 366 u|353 357 433 446 d|431 431 439 474 d|439 439 505 612 d|463 506 525 597 d
457 525 527 541 d|506 526 539 553 d|443 451 539 559 u|440 450 518 522 d|493 505 518 535 u|407 410 505 506 u
396 409 410 434 d|400 408 427 435 d|400 420 428 432 u|410 418 455 457 d|415 421 453 468 u|421 422 446 468 d
420 446 456 457 d|397 410 455 457 u|393 410 420 435 d|400 416 418 427 u|412 414 433 433 d|413 432 436 437 d
418 436 452 453 d|451 451 479 480 d|437 442 477 478 u|403 423 443 447 u|415 425 447 447 d|411 413 446 487 u
412 414 441 445 d|440 440 453 487 d|453 454 469 472 d|455 461 468 480 u|427 427 462 467 u|412 416 427 433 u
409 416 425 433 d|385 396 425 427 u|383 393 394 395 u|381 393 404 406 d|389 404 415 438 d|399 400 414 425 u
381 382 399 402 u|371 382 383 387 u|363 372 380 381 u|359 361 372 378 u|323 348 361 363 u|343 349 359 363 d
356 359 382 383 d|358 359 382 383 u|358 359 394 397 d|374 390 393 394 u|378 385 391 423 u|348 356 385 389 u
343 346 356 374 u|342 345 350 359 d|329 348 350 351 u|334 336 349 349 u|323 336 337 338 d|311 333 338 345 u
333 334 345 357 d|340 344 367 369 d|363 367 377 385 d|358 367 376 380 u|362 367 368 377 u|355 366 382 383 d
373 378 380 381 u|366 368 378 381 u|366 367 368 377 u|345 346 368 370 u|343 346 355 360 d|350 356 360 363 d
359 360 369 369 d|357 357 369 369 u|359 359 380 382 d|363 366 382 383 u|342 363 367 367 u|349 357 363 364 u
353 356 357 365 u|352 356 367 368 d|363 365 367 375 u|353 355 365 366 u|351 351 354 355 u|352 352 365 366 d
355 360 361 363 u|351 353 361 364 u|349 350 355 359 u|341 349 350 352 u|314 315 316 317 d|303 317 323 330 d
307 319 327 327 u|318 321 343 344 d|321 341 343 353 u|336 338 341 341 u|336 341 342 343 d|340 341 343 345 d
338 341 342 347 d|341 342 346 348 d|342 345 348 353 u|341 342 345 347 u|340 340 349 361 d|337 348 353 359 d
347 353 354 359 d|353 353 372 382 d|369 374 375 383 d|373 374 378 378 d|348 351 378 379 u|342 346 350 352 u
345 345 369 370 d|348 360 368 370 u|350 356 360 376 u|347 348 354 364 u|257 261 346 360 u|175 231 261 262 u
187 218 227 247 u|218 218 240 257 d|229 240 282 307 d|248 268 282 285 u|263 268 310 329 d|280 282 308 317 u
247 259 282 295 u|247 260 263 277 d|238 245 261 289 u|213 231 247 258 u|220 232 244 257 d|172 198 243 244 u
164 199 201 215 d|172 200 213 245 d|170 174 211 213 u|98 121 174 185 u|120 121 140 145 d|133 139 198 210 d
197 198 250 268 d|224 248 253 267 d|226 240 253 263 u|213 240 242 243 d|215 242 243 245 d|220 227 242 270 u
226 227 265 276 d|261 266 275 302 d|251 276 283 295 d|282 284 304 308 d|293 304 397 398 d|336 356 397 399 u
328 356 363 368 d|337 339 363 364 u|339 340 350 368 d|349 350 446 448 d|407 413 446 477 u|408 413 422 423 d
416 423 433 446 d|428 433 434 448 u|420 431 432 442 u|408 410 431 432 u`.split(/[|\n]/);

var html = '';
candles.forEach(function (line, i) {
    var c = line.split(' ');
    var x = Math.round(46 + i * 4.433);
    html += `<path class="wick" d="M${x}.5 ${c[0]}V${c[3]}"/>`;
    html += `<rect class="${c[4] === 'u' ? 'up' : 'down'}" x="${x - 1}" y="${c[1]}" width="4" height="${c[2] - c[1]}"/>`;
});
document.getElementById('candles').innerHTML = html;

// price scale, labels covered by a tag stay empty
html = '';
for (let p = 154500; p >= 153900; p -= 50) {
    let covered = p === 154100 || p === 154050;
    html += `<span>${covered ? '' : String(p).slice(0, 3) + ',' + String(p).slice(3)}</span>`;
}
document.getElementById('prices').innerHTML = html;

// time scale, 20:00 and 21:00 give way to the cursor tag
html = '';
for (let h = 6; h <= 26; h++) {
    let label = h === 24 ? '4' : String(h % 24).padStart(2, '0') + ':00';
    html += `<span>${h === 20 || h === 21 ? '' : label}</span>`;
}
document.getElementById('times').innerHTML = html;

// watchlist: flag, base currency, quote colour
var base = { EUR: '#1c4fa8', GBP: '#d98a9c', NZD: '#1d2f7c', USD: '#e9e4ee' };
var rows = [
    ['yellow', 'EUR', '#c9a0b4'], ['yellow', 'EUR', '#e8505c'], ['yellow', 'EUR', '#33408c'], ['yellow', 'EUR', '#d8273c'],
    ['yellow', 'EUR', '#b04a68'], ['yellow', 'EUR', '#4d9a50'], ['purple', 'GBP', '#ffffff'], ['purple', 'GBP', '#5a8fd0'],
    ['yellow', 'EUR', '#2a3c94'], ['purple', 'GBP', '#e04a58'], ['purple', 'GBP', '#2b3f90'], ['purple', 'GBP', '#d8273c'],
    ['purple', 'GBP', '#2a3c94'], ['purple', 'GBP', '#4d9a50'], ['cyan', 'NZD', '#e0505c'], ['cyan', 'NZD', '#6c8fd0'],
    ['cyan', 'NZD', '#ffffff'], ['green', 'NZD', '#d8273c'], ['cyan', 'NZD', '#d04a5c'], ['green', 'USD', '#e8606c'],
    ['green', 'USD', '#d8273c'], ['green', 'USD', '#ffffff'], ['green', 'USD', '#e8707c'], ['green', 'USD', '#4d9a50'],
    ['green', 'USD', '#d83040'], ['green', 'USD', '#d06080']
];
var detail = {
    EUR: '<circle cx="6" cy="9" r="2.500" fill="none" stroke="#9fc4f5" stroke-dasharray="1 1"/>',
    GBP: '<path d="M1 9h10M6 4v10M3 6l6 6M9 6l-6 6" stroke="#fff"/><path d="M1 9h10M6 4v10" stroke="#c32643" stroke-width=".7"/>',
    NZD: '<path d="M1 8a5 5 0 0 1 5-4v4z" fill="#d0607c"/><path d="M8 9v3" stroke="#fff" stroke-width=".7"/>',
    USD: '<path d="M5 7h6M2 10h9M3 12.500h6" stroke="#d0344e"/><path d="M1 9a5 5 0 0 1 5-5v5z" fill="#2d55b5"/>'
};
document.getElementById('watch').innerHTML = rows.map(function (r, i) {
    return `<div class="row${i === 21 ? ' selected' : ''}"><i class="flag ${r[0]}-flag"></i>
        <svg viewBox="0 0 15 15"><circle cx="10" cy="5" r="4.500" fill="${r[2]}"/><path d="M7 5q3-2 7 0" stroke="#fff" fill="none"/>
        ${r[2] === '#ffffff' ? '<circle cx="10" cy="4.500" r="2" fill="#d8273c"/>' : ''}
        <circle cx="6" cy="9" r="5" fill="${base[r[1]]}" stroke="#0f0f0f" stroke-width=".5"/>${detail[r[1]]}</svg>${r[1]}</div>`;
}).join('');
```
